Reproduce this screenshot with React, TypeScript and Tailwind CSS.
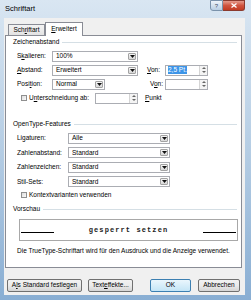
const Arrow = () => (
  <svg width="5" height="3" viewBox="0 0 5 3">
    <path d="M0 0h5L2.5 3z" fill="#111" />
  </svg>
);

function Combo({ value, w }: { value: string; w: string }) {
  return (
    <div className={`${w} h-[11px] flex border border-[#abadb3] bg-white`}>
      <div className="flex-1 pl-[3px] flex items-center">{value}</div>
      <div className="w-[8px] m-[1px] flex items-center justify-center border border-[#a3a3a3] rounded-[1px] bg-gradient-to-b from-[#f4f4f4] to-[#d8d8d8]">
        <Arrow />
      </div>
    </div>
  );
}

function Spin({ value, selected }: { value?: string; selected?: boolean }) {
  return (
    <div className="w-[43px] h-[11px] flex border border-[#abadb3] bg-white">
      <div className="flex-1 pl-[2px] flex items-center">
        {value && <span className={selected ? "bg-[#3d95e8] text-white py-[1px]" : ""}>{value}</span>}
      </div>
      <div className="w-[8px] flex flex-col border-l border-[#d5d5d5] bg-[#f4f4f4]">
        <div className="flex-1 flex items-center justify-center">
          <svg width="4" height="2" viewBox="0 0 4 2"><path d="M0 2h4L2 0z" fill="#666" /></svg>
        </div>
        <div className="flex-1 flex items-center justify-center">
          <svg width="4" height="2" viewBox="0 0 4 2"><path d="M0 0h4L2 2z" fill="#666" /></svg>
        </div>
      </div>
    </div>
  );
}

function Check() {
  return <div className="w-[6px] h-[6px] border border-[#8f8f8f] bg-gradient-to-br from-[#dcdcdc] to-[#fbfbfb]" />;
}

function GroupHead({ title }: { title: string }) {
  return (
    <div className="h-[13px] flex items-center pl-[7px] pr-[4px]">
      <span>{title}</span>
      <div className="flex-1 h-px ml-[3px] bg-[#d5dfe5]" />
    </div>
  );
}

function Btn({ children, w, def }: { children: React.ReactNode; w: string; def?: boolean }) {
  return (
    <div
      className={`${w} h-[13px] flex items-center justify-center rounded-[2px] border ${
        def
          ? "border-[#3c7fb1] bg-gradient-to-b from-[#eaf6fd] to-[#c4e5f6]"
          : "border-[#707070] bg-gradient-to-b from-[#f2f2f2] via-[#ebebeb] to-[#d5d5d5]"
      }`}
    >
      {children}
    </div>
  );
}

export default function App() {
  return (
    <div className="w-[251px] h-[300px] overflow-hidden flex flex-col bg-gradient-to-b from-[#d9e6f2] via-[#b5cde4] to-[#89aed3] font-['Liberation_Sans',Arial,sans-serif] text-[6.5px] text-black leading-none">
      {/* title bar */}
      <div className="h-[18px] shrink-0 flex items-start pl-[5px]">
        <span className="mt-[5px] text-[7.5px]">Schriftart</span>
        <div className="ml-auto mr-[6px] flex">
          <div className="w-[13px] h-[11px] flex items-center justify-center rounded-bl-[3px] border border-[#7a92ab] bg-gradient-to-b from-[#eef4fa] to-[#b9cee3] text-[6px] text-[#3d4f63]">
            ?
          </div>
          <div className="w-[22px] h-[11px] flex items-center justify-center rounded-br-[3px] border border-l-0 border-[#8b3a2e] bg-gradient-to-b from-[#e49a8c] via-[#d0543f] to-[#c23b22]">
            <svg width="6" height="5" viewBox="0 0 6 5">
              <path d="M0.5 0.5L5.5 4.5M5.5 0.5L0.5 4.5" stroke="#fff" strokeWidth="1.3" />
            </svg>
          </div>
        </div>
      </div>

      {/* client */}
      <div className="flex-1 ml-[4px] mr-[6px] mb-[5px] bg-[#f0f0f0] flex flex-col">
        <div className="h-[18px] -mb-px relative z-10 flex items-end pl-[4px]">
          <div className="w-[37px] h-[11px] mb-px flex items-center justify-center border border-b-0 border-[#898c95] bg-gradient-to-b from-[#f3f3f3] to-[#e3e3e3]">
            Sch<u>r</u>iftart
          </div>
          <div className="w-[38px] h-[14px] flex items-center justify-center border border-b-0 border-[#898c95] bg-white">
            <u>E</u>rweitert
          </div>
        </div>

        <div className="ml-[1px] w-[237px] h-[233px] border border-[#898c95] bg-white flex flex-col">
          <GroupHead title="Zeichenabstand" />
          <div className="h-[14px] flex items-center pl-[11px]">
            <span className="w-[35px]">S<u>k</u>alieren:</span>
            <Combo w="w-[86px]" value="100%" />
          </div>
          <div className="h-[14px] flex items-center pl-[11px]">
            <span className="w-[35px]"><u>A</u>bstand:</span>
            <Combo w="w-[86px]" value="Erweitert" />
            <span className="w-[18px] ml-[9px]"><u>V</u>on:</span>
            <Spin value="2,5 Pt." selected />
          </div>
          <div className="h-[14px] flex items-center pl-[11px]">
            <span className="w-[35px]">Posi<u>t</u>ion:</span>
            <Combo w="w-[53px]" value="Normal" />
            <span className="w-[15px] ml-[45px]">V<u>o</u>n:</span>
            <Spin />
          </div>
          <div className="h-[14px] flex items-center pl-[15px]">
            <Check />
            <span className="w-[66px] ml-[2px]">U<u>n</u>terschneidung ab:</span>
            <Spin />
            <span className="ml-[7px]"><u>P</u>unkt</span>
          </div>

          <div className="mt-[13px]">
            <GroupHead title="OpenType-Features" />
          </div>
          {[
            ["Ligaturen:", "Alle"],
            ["Zahlenabstand:", "Standard"],
            ["Zahlenzeichen:", "Standard"],
            ["Stil-Sets:", "Standard"],
          ].map(([l, v]) => (
            <div key={l} className="h-[14.5px] flex items-center pl-[11px]">
              <span className="w-[51px]">{l}</span>
              <Combo w="w-[102px]" value={v} />
            </div>
          ))}
          <div className="h-[12px] flex items-center pl-[15px]">
            <Check />
            <span className="ml-[2px]">Kontextvarianten verwenden</span>
          </div>

          <div className="mt-[2px]">
            <GroupHead title="Vorschau" />
          </div>
          <div className="mt-[3px] ml-[13px] w-[219px] h-[22px] border border-[#a8a8a8] flex items-center pl-[1px] pr-[1px]">
            <div className="w-[33px] h-px bg-black mt-[5px]" />
            <div className="flex-1 text-center font-['Liberation_Mono',monospace] text-[7px] tracking-[1.1px] font-bold text-[#222]">
              gesperrt setzen
            </div>
            <div className="w-[33px] h-px bg-black mt-[5px]" />
          </div>
          <div className="mt-[4px] h-[12px] flex items-center pl-[11px]">
            Die TrueType-Schriftart wird für den Ausdruck und die Anzeige verwendet.
          </div>
        </div>

        <div className="mt-[11px] flex pl-[3px]">
          <Btn w="w-[75px]">A<u>l</u>s Standard festlegen</Btn>
          <div className="ml-[6px]">
            <Btn w="w-[45px]">Text<u>e</u>ffekte...</Btn>
          </div>
          <div className="ml-[17px]">
            <Btn w="w-[41px]" def>OK</Btn>
          </div>
          <div className="ml-[7px]">
            <Btn w="w-[42px]">Abbrechen</Btn>
          </div>
        </div>
      </div>
    </div>
  );
}
